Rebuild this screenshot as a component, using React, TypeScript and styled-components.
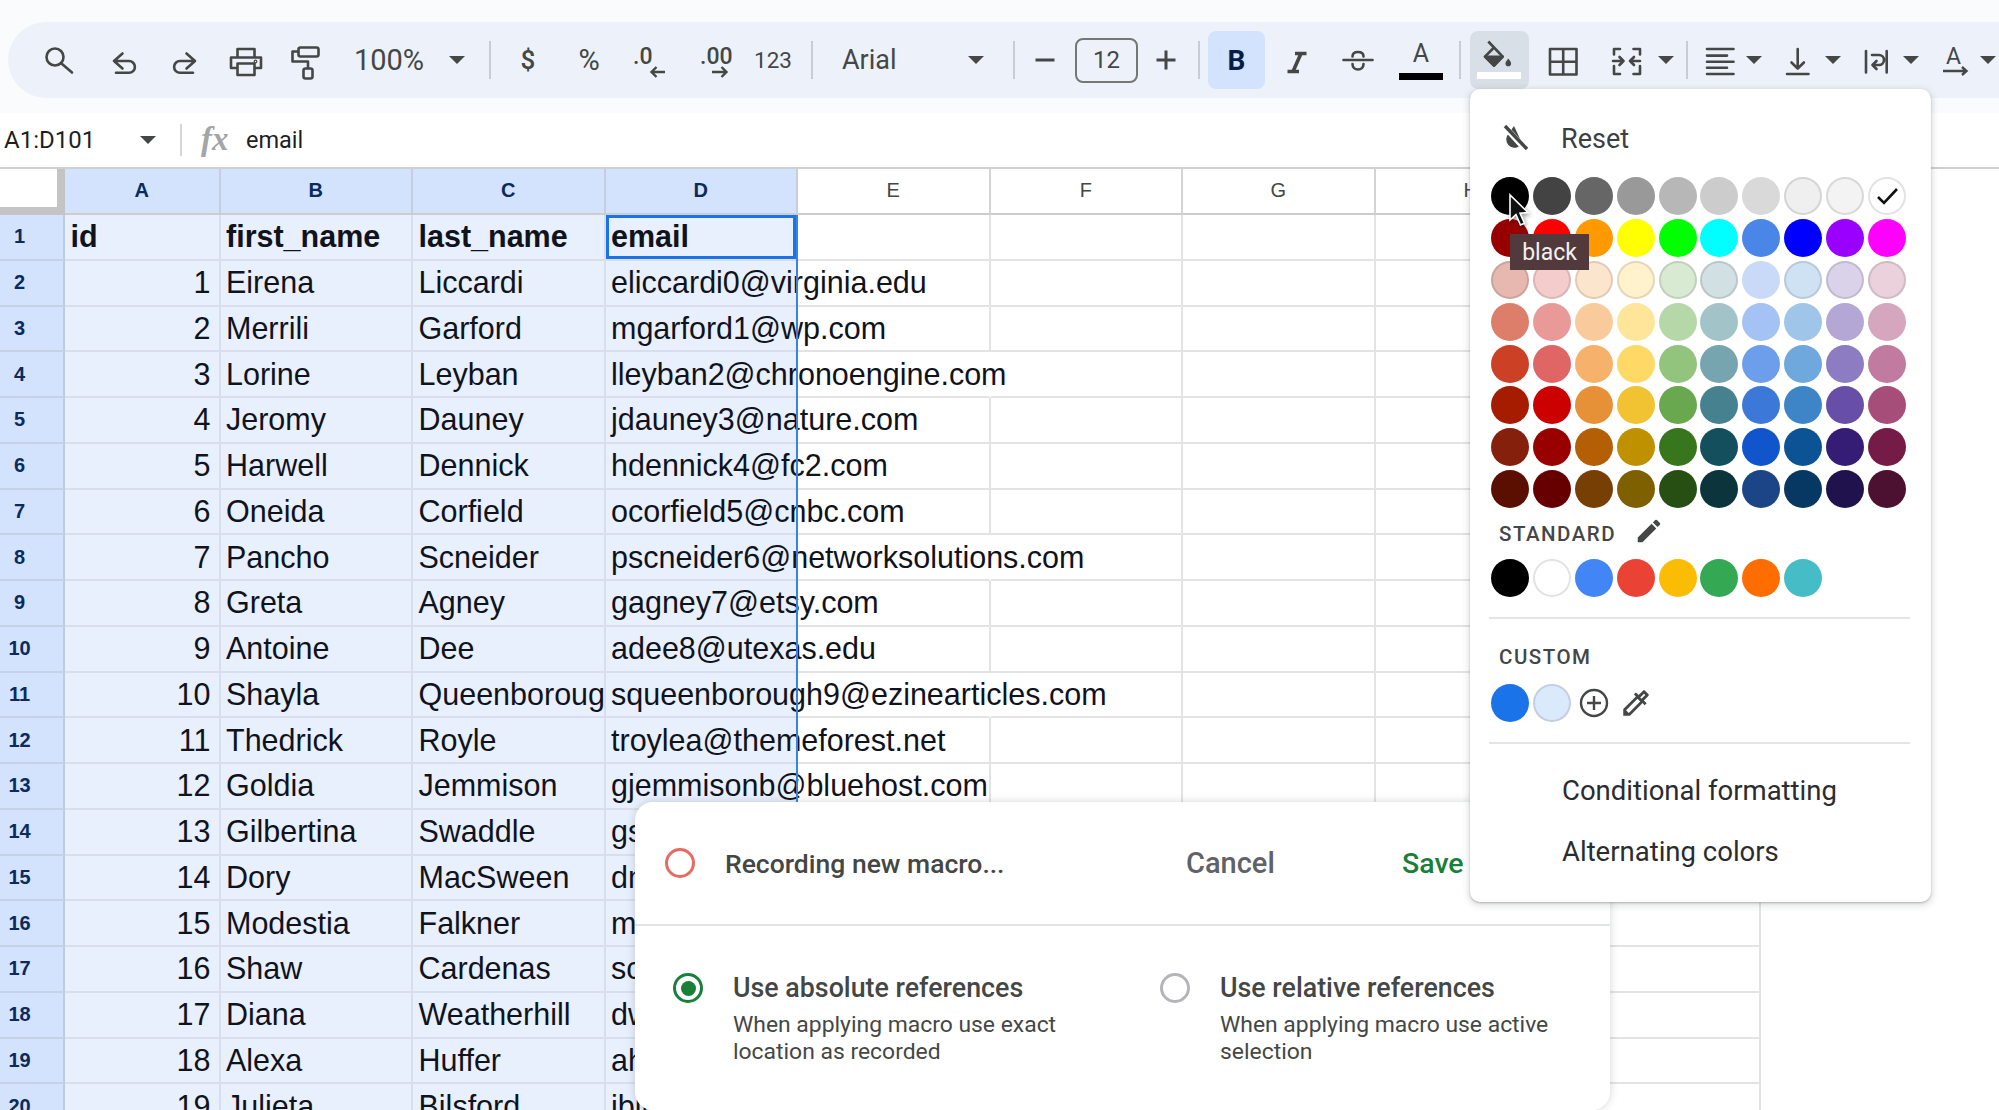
import { FC, ReactNode } from 'react';
import styled, { createGlobalStyle, css } from 'styled-components';
import { MdEdit, MdOutlineColorize } from 'react-icons/md';

const UI_FONT = `Roboto, "Liberation Sans", sans-serif`;
const CELL_FONT = `"Liberation Sans", Arial, sans-serif`;
const ICON = '#444746';

const GlobalStyle = createGlobalStyle`
    html, body {
        margin: 0;
        padding: 0;
        background: #fff;
    }
`;

const Page = styled.div`
    position: relative;
    width: 1999px;
    height: 1110px;
    overflow: hidden;
    display: flex;
    flex-direction: column;
    background: #fff;
    font-family: ${UI_FONT};
`;

/* toolbar */

const TopBand = styled.div`
    height: 113px;
    flex: none;
    box-sizing: border-box;
    padding: 22px 0 15px 8px;
    background: #f9fbfd;
`;

const Toolbar = styled.div`
    height: 76px;
    margin-right: -40px;
    padding-left: 31px;
    display: flex;
    align-items: center;
    border-radius: 38px;
    background: #edf2fa;
`;

const Tool = styled.div<{ $w?: number; $ml?: number }>`
    flex: none;
    width: ${p => p.$w ?? 40}px;
    height: 40px;
    margin-left: ${p => p.$ml ?? 0}px;
    display: flex;
    align-items: center;
    justify-content: center;
    color: ${ICON};

    svg {
        display: block;
    }
`;

const ToolText = styled(Tool)<{ $size?: number; $weight?: number; $left?: boolean }>`
    font-size: ${p => p.$size ?? 24}px;
    font-weight: ${p => p.$weight ?? 400};
    justify-content: ${p => (p.$left ? 'flex-start' : 'center')};
`;

const Caret = styled(Tool).attrs({ $w: 20 })`
    &::after {
        content: '';
        border-left: 8px solid transparent;
        border-right: 8px solid transparent;
        border-top: 8px solid ${ICON};
    }
`;

const Divider = styled.div<{ $ml: number }>`
    flex: none;
    width: 2px;
    height: 38px;
    margin-left: ${p => p.$ml}px;
    background: #c9ccd1;
`;

const SizeBox = styled.div`
    flex: none;
    box-sizing: border-box;
    width: 63px;
    height: 45px;
    margin-left: 15px;
    display: flex;
    align-items: center;
    justify-content: center;
    border: 2px solid #747775;
    border-radius: 8px;
    color: ${ICON};
    font-size: 24px;
`;

const ToggleButton = styled.div<{ $w: number; $ml: number; $bg: string }>`
    flex: none;
    position: relative;
    width: ${p => p.$w}px;
    height: 58px;
    margin-left: ${p => p.$ml}px;
    display: flex;
    align-items: center;
    justify-content: center;
    border-radius: 8px;
    background: ${p => p.$bg};
`;

const BoldGlyph = styled.span`
    font-size: 28px;
    font-weight: 700;
    color: #041e49;
`;

const TextColorTool = styled.div`
    flex: none;
    width: 44px;
    height: 40px;
    margin-left: 21px;
    display: flex;
    flex-direction: column;
    align-items: center;
    justify-content: space-between;
    color: ${ICON};
    font-size: 25px;
    line-height: 28px;
`;

const ColorBar = styled.div<{ $color: string }>`
    width: 44px;
    height: 7px;
    flex: none;
    background: ${p => p.$color};
`;

const FillBar = styled(ColorBar)`
    position: absolute;
    left: 7px;
    bottom: 10px;
`;

const Stroke: FC<{ w?: number; children: ReactNode }> = ({ w = 40, children }) => (
    <svg width={w} height={40} viewBox={`0 0 ${w} 40`} fill="none" stroke={ICON} strokeWidth={2.6} strokeLinecap="round" strokeLinejoin="round">
        {children}
    </svg>
);

/* formula bar */

const FormulaBar = styled.div`
    height: 54px;
    flex: none;
    box-sizing: border-box;
    padding: 0 0 1px 4px;
    display: flex;
    align-items: center;
    background: #fff;
`;

const NameBox = styled.div`
    width: 136px;
    font-size: 24px;
    color: #1f1f1f;
`;

const SmallCaret = styled.div`
    flex: none;
    margin-right: 24px;
    border-left: 8px solid transparent;
    border-right: 8px solid transparent;
    border-top: 8px solid ${ICON};
`;

const BarDivider = styled.div`
    width: 2px;
    height: 32px;
    flex: none;
    background: #d4d6d9;
`;

const FxLabel = styled.div`
    margin-left: 19px;
    width: 45px;
    font-family: "Liberation Serif", serif;
    font-style: italic;
    font-weight: 700;
    font-size: 33px;
    color: #a3a5a8;
`;

const FormulaText = styled.div`
    font-size: 23.5px;
    color: #1f1f1f;
`;

/* sheet */

const gridColumns = css`
    display: grid;
    grid-template-columns: 65px 155.5px repeat(9, 192.5px);
`;

const Sheet = styled.div`
    position: relative;
    flex: 1;
    overflow: hidden;
    border-top: 2px solid #cfcfcf;
`;

const HeaderRow = styled.div`
    ${gridColumns};
    height: 46px;
    box-sizing: border-box;
`;

const Corner = styled.div`
    box-sizing: border-box;
    border-right: 8px solid #c4c4c4;
    border-bottom: 8px solid #c4c4c4;
    background: #fff;
`;

const ColumnHead = styled.div<{ $selected: boolean }>`
    box-sizing: border-box;
    padding-bottom: 2px;
    display: flex;
    align-items: center;
    justify-content: center;
    border-right: 2px solid ${p => (p.$selected ? '#c3cede' : '#d4d4d4')};
    border-bottom: 2px solid #cdcdcd;
    background: ${p => (p.$selected ? '#d3e3fd' : '#fff')};
    color: ${p => (p.$selected ? '#0b2a5e' : '#444746')};
    font-family: ${CELL_FONT};
    font-size: 20px;
    font-weight: ${p => (p.$selected ? 700 : 400)};
`;

const DataRow = styled.div`
    ${gridColumns};
    height: 45.75px;
`;

const RowHead = styled.div`
    box-sizing: border-box;
    padding-right: 24px;
    display: flex;
    align-items: center;
    justify-content: center;
    border-right: 2px solid #bccbe2;
    border-bottom: 2px solid #c6d2e4;
    background: #d3e3fd;
    color: #0b2a5e;
    font-family: ${CELL_FONT};
    font-size: 20px;
    font-weight: 700;
`;

const Cell = styled.div<{ $right?: boolean; $bold?: boolean; $spill?: boolean; $active?: boolean }>`
    box-sizing: border-box;
    padding: 0 8px 0 5.5px;
    display: flex;
    align-items: center;
    justify-content: ${p => (p.$right ? 'flex-end' : 'flex-start')};
    overflow: ${p => (p.$spill ? 'visible' : 'hidden')};
    white-space: nowrap;
    border-right: 2px solid #d8deea;
    border-bottom: 2px solid #d8deea;
    background: #e8effd;
    color: #10131c;
    font-family: ${CELL_FONT};
    font-size: 30.5px;
    font-weight: ${p => (p.$bold ? 700 : 400)};
    ${p =>
        p.$active &&
        css`
            box-shadow: inset 0 0 0 3px #1a73e8;
        `}
`;

const BlankCell = styled.div<{ $open?: boolean }>`
    box-sizing: border-box;
    border-right: 2px solid ${p => (p.$open ? 'transparent' : '#e3e3e3')};
    border-bottom: 2px solid #e3e3e3;
`;

const SelectionEdge = styled.div`
    position: absolute;
    left: 796px;
    top: 46px;
    bottom: 0;
    width: 2px;
    background: #3b82e6;
`;

/* fill colour popup */

const ColorPopup = styled.div`
    position: absolute;
    left: 1470px;
    top: 89px;
    width: 461px;
    height: 813px;
    box-sizing: border-box;
    padding: 0 21px;
    border-radius: 10px;
    background: #fff;
    box-shadow: 0 2px 6px 2px rgba(60, 64, 67, 0.15), 0 1px 2px rgba(60, 64, 67, 0.3);
    color: #3c4043;
`;

const ResetRow = styled.div`
    height: 88px;
    padding: 11px 0 0 11px;
    box-sizing: border-box;
    display: flex;
    align-items: center;
    gap: 33px;
    font-size: 27px;

    svg {
        transform: translateY(-2px);
    }
`;

const SwatchGrid = styled.div`
    display: grid;
    grid-template-columns: repeat(10, 38px);
    grid-auto-rows: 38px;
    gap: 3.9px;
`;

const Swatch = styled.div<{ $color: string; $outlined?: boolean }>`
    position: relative;
    box-sizing: border-box;
    width: 38px;
    height: 38px;
    border-radius: 50%;
    background: ${p => p.$color};
    ${p => p.$outlined && 'border: 2px solid rgba(0, 0, 0, 0.11);'}

    svg {
        position: absolute;
        left: 6px;
        top: 7px;
    }
`;

const SectionLabel = styled.div<{ $h: number; $pt?: number }>`
    height: ${p => p.$h}px;
    box-sizing: border-box;
    padding: ${p => p.$pt ?? 0}px 0 0 8px;
    display: flex;
    align-items: center;
    gap: 18px;
    color: #444746;
    font-size: 20.5px;
    font-weight: 500;
    letter-spacing: 1.5px;

    svg {
        transform: translateY(-3px);
    }
`;

const PopupRule = styled.div`
    height: 2px;
    margin: 20px 0 0 -2px;
    background: #e3e5e8;
`;

const SwatchRow = styled.div`
    display: flex;
    gap: 3.9px;
    align-items: center;
`;

const IconSlot = styled.div`
    width: 38px;
    height: 38px;
    flex: none;
    display: flex;
    align-items: center;
    justify-content: center;
    color: #444746;
`;

const MenuList = styled.div`
    margin-top: 15.5px;
`;

const MenuItem = styled.div`
    height: 61px;
    padding-left: 71px;
    display: flex;
    align-items: center;
    font-size: 27.5px;
    color: #2a2c2f;
`;

const Tooltip = styled.div`
    position: absolute;
    left: 1510px;
    top: 234px;
    width: 79px;
    height: 36px;
    display: flex;
    align-items: center;
    justify-content: center;
    background: #523a3c;
    color: #f4f0f0;
    font-size: 23px;
`;

const Cursor = styled.svg`
    position: absolute;
    left: 1508px;
    top: 193px;
    filter: drop-shadow(1px 2px 2px rgba(0, 0, 0, 0.4));
`;

/* macro panel */

const MacroPanel = styled.div`
    position: absolute;
    left: 635px;
    top: 802px;
    width: 975px;
    height: 308px;
    border-radius: 18px;
    background: #fff;
    box-shadow: 0 0 8px rgba(60, 64, 67, 0.22);
    overflow: hidden;
`;

const MacroHead = styled.div`
    height: 124px;
    box-sizing: border-box;
    padding-left: 30px;
    display: flex;
    align-items: center;
    border-bottom: 2px solid #e2e3e5;
`;

const RecordRing = styled.div`
    width: 30px;
    height: 30px;
    flex: none;
    box-sizing: border-box;
    margin-right: 30px;
    border: 3.5px solid #e76a63;
    border-radius: 50%;
`;

const MacroAction = styled.div<{ $w: number; $color: string; $size: number }>`
    width: ${p => p.$w}px;
    flex: none;
    color: ${p => p.$color};
    font-size: ${p => p.$size}px;
    font-weight: 500;
`;

const MacroOptions = styled.div`
    display: grid;
    grid-template-columns: 487px 1fr;
    padding: 47px 0 0 38px;
`;

const MacroOption = styled.div`
    display: flex;
    gap: 30px;
`;

const Radio = styled.div<{ $on?: boolean }>`
    width: 30px;
    height: 30px;
    flex: none;
    box-sizing: border-box;
    display: flex;
    align-items: center;
    justify-content: center;
    border: 3.5px solid ${p => (p.$on ? '#188038' : '#b3b5b8')};
    border-radius: 50%;

    ${p =>
        p.$on &&
        css`
            &::after {
                content: '';
                width: 15px;
                height: 15px;
                border-radius: 50%;
                background: #188038;
            }
        `}
`;

const OptionTitle = styled.div`
    font-size: 26.8px;
    font-weight: 500;
    line-height: 30px;
    color: #444746;
`;

const OptionNote = styled.div`
    width: 345px;
    margin-top: 9px;
    font-size: 22.9px;
    line-height: 26.5px;
    color: #444746;
`;

const PALETTE = [
    '#000000', '#434343', '#666666', '#999999', '#b7b7b7', '#cccccc', '#d9d9d9', '#efefef', '#f3f3f3', '#ffffff',
    '#980000', '#ff0000', '#ff9900', '#ffff00', '#00ff00', '#00ffff', '#4a86e8', '#0000ff', '#9900ff', '#ff00ff',
    '#e6b8af', '#f4cccc', '#fce5cd', '#fff2cc', '#d9ead3', '#d0e0e3', '#c9daf8', '#cfe2f3', '#d9d2e9', '#ead1dc',
    '#dd7e6b', '#ea9999', '#f9cb9c', '#ffe599', '#b6d7a8', '#a2c4c9', '#a4c2f4', '#9fc5e8', '#b4a7d6', '#d5a6bd',
    '#cc4125', '#e06666', '#f6b26b', '#ffd966', '#93c47d', '#76a5af', '#6d9eeb', '#6fa8dc', '#8e7cc3', '#c27ba0',
    '#a61c00', '#cc0000', '#e69138', '#f1c232', '#6aa84f', '#45818e', '#3c78d8', '#3d85c6', '#674ea7', '#a64d79',
    '#85200c', '#990000', '#b45f06', '#bf9000', '#38761d', '#134f5c', '#1155cc', '#0b5394', '#351c75', '#741b47',
    '#5b0f00', '#660000', '#783f04', '#7f6000', '#274e13', '#0c343d', '#1c4587', '#073763', '#20124d', '#4c1130',
];
const OUTLINED = ['#efefef', '#f3f3f3', '#ffffff', '#fce5cd', '#fff2cc', '#d9ead3', '#d0e0e3', '#cfe2f3', '#d9d2e9', '#ead1dc', '#e6b8af', '#f4cccc'];
const STANDARD = ['#000000', '#ffffff', '#4285f4', '#ea4335', '#fbbc04', '#34a853', '#ff6d01', '#46bdc6'];

const COLUMNS = ['A', 'B', 'C', 'D', 'E', 'F', 'G', 'H', 'I'];

const PEOPLE: [string, string, string][] = [
    ['Eirena', 'Liccardi', 'eliccardi0@virginia.edu'],
    ['Merrili', 'Garford', 'mgarford1@wp.com'],
    ['Lorine', 'Leyban', 'lleyban2@chronoengine.com'],
    ['Jeromy', 'Dauney', 'jdauney3@nature.com'],
    ['Harwell', 'Dennick', 'hdennick4@fc2.com'],
    ['Oneida', 'Corfield', 'ocorfield5@cnbc.com'],
    ['Pancho', 'Scneider', 'pscneider6@networksolutions.com'],
    ['Greta', 'Agney', 'gagney7@etsy.com'],
    ['Antoine', 'Dee', 'adee8@utexas.edu'],
    ['Shayla', 'Queenborough', 'squeenborough9@ezinearticles.com'],
    ['Thedrick', 'Royle', 'troylea@themeforest.net'],
    ['Goldia', 'Jemmison', 'gjemmisonb@bluehost.com'],
    ['Gilbertina', 'Swaddle', 'gswaddlec@mail.com'],
    ['Dory', 'MacSween', 'dmacsweend@mail.com'],
    ['Modestia', 'Falkner', 'mfalknere@mail.com'],
    ['Shaw', 'Cardenas', 'scardenasf@mail.com'],
    ['Diana', 'Weatherhill', 'dweatherhillg@mail.com'],
    ['Alexa', 'Huffer', 'ahufferh@mail.com'],
    ['Julieta', 'Bilsford', 'jbilsfordi@mail.com'],
];

const ToolbarRow: FC = () => (
    <Toolbar>
        <Tool>
            <Stroke>
                <circle cx="16" cy="17" r="8.5" />
                <path d="M22.5 23.5 33 32.5" />
            </Stroke>
        </Tool>
        <Tool $ml={25}>
            <Stroke>
                <path d="M18.5 13.5 10 21l8.5 7.5M10 21h15a5.9 5.9 0 0 1 0 11.8H12" />
            </Stroke>
        </Tool>
        <Tool $ml={21}>
            <Stroke>
                <path d="M21.5 13.5 30 21l-8.5 7.5M30 21H15a5.9 5.9 0 0 0 0 11.8h13" />
            </Stroke>
        </Tool>
        <Tool $ml={21}>
            <Stroke>
                <path d="M11.5 17V9h17v8M11 28H5V17.5h30V28h-6" />
                <path d="M11.5 23.5h17V35h-17z" />
                <circle cx="29.5" cy="21.5" r="0.6" />
            </Stroke>
        </Tool>
        <Tool $ml={19}>
            <Stroke>
                <rect x="13.5" y="7.5" width="20" height="9" rx="2" />
                <path d="M13 11.5H7.5v10H23V28" />
                <rect x="18.5" y="28.5" width="9" height="10" rx="2" />
            </Stroke>
        </Tool>
        <ToolText $w={80} $ml={24} $size={29}>100%</ToolText>
        <Caret $ml={18} />
        <Divider $ml={22} />
        <ToolText $w={30} $ml={22} $size={26} $weight={500}>$</ToolText>
        <ToolText $w={30} $ml={31} $size={29}>%</ToolText>
        <Tool $ml={26}>
            <svg width="40" height="40" viewBox="0 0 40 40" fill={ICON}>
                <text x="3" y="24" fontSize="23" fontWeight="500" fontFamily="Roboto, sans-serif">.0</text>
                <path d="M22 32h13M26.5 27 21.5 32l5 5" fill="none" stroke={ICON} strokeWidth="2.4" />
            </svg>
        </Tool>
        <Tool $w={44} $ml={25}>
            <svg width="44" height="40" viewBox="0 0 44 40" fill={ICON}>
                <text x="5" y="24" fontSize="23" fontWeight="500" fontFamily="Roboto, sans-serif">.00</text>
                <path d="M17 32h14M26.5 27l5 5-5 5" fill="none" stroke={ICON} strokeWidth="2.4" />
            </svg>
        </Tool>
        <ToolText $w={44} $ml={12} $size={22.5}>123</ToolText>
        <Divider $ml={16} />
        <ToolText $w={100} $ml={29} $size={27} $left>Arial</ToolText>
        <Caret $ml={24} />
        <Divider $ml={27} />
        <Tool $w={30} $ml={15}>
            <svg width="30" height="40" viewBox="0 0 30 40" stroke={ICON} strokeWidth="3">
                <path d="M5.5 20h19" />
            </svg>
        </Tool>
        <SizeBox>12</SizeBox>
        <Tool $w={30} $ml={13}>
            <svg width="30" height="40" viewBox="0 0 30 40" stroke={ICON} strokeWidth="3">
                <path d="M5.5 20h19M15 10.5v19" />
            </svg>
        </Tool>
        <Divider $ml={17} />
        <ToggleButton $w={57} $ml={8} $bg="#d3e3fd">
            <BoldGlyph>B</BoldGlyph>
        </ToggleButton>
        <Tool $ml={12}>
            <svg width="40" height="40" viewBox="0 0 40 40" fill="none" stroke={ICON} strokeWidth="3.6">
                <path d="M18 13.5h11.5M10.5 31.5H22M24 13.5l-8 18" />
            </svg>
        </Tool>
        <Tool $ml={21}>
            <Stroke>
                <path d="M5.5 20h29" />
                <path d="M14.5 16.5c0-3 2.5-4.5 5.5-4.5s5.5 1.5 5.5 4.5" />
                <path d="M14.5 24c0 3.5 2.5 5.5 5.5 5.5s5.5-2 5.5-5.5" />
            </Stroke>
        </Tool>
        <TextColorTool>
            <span>A</span>
            <ColorBar $color="#000" />
        </TextColorTool>
        <Divider $ml={16} />
        <ToggleButton $w={59} $ml={9} $bg="#d9dfe7">
            <svg width="59" height="58" viewBox="0 0 59 58" fill="none" stroke={ICON} strokeWidth="2.6" strokeLinejoin="round">
                <path d="M24 16.5 15 25.7l9 9 8.7-9zM18.3 10.5 24 16.5" />
                <path d="M15 25.7h17.7L24 34.7z" fill={ICON} />
                <path d="M38.3 27.5c-1.6 2.2-2.8 3.4-2.8 4.9a2.8 2.8 0 0 0 5.6 0c0-1.5-1.2-2.7-2.8-4.9z" fill={ICON} stroke="none" />
            </svg>
            <FillBar $color="#fff" />
        </ToggleButton>
        <Tool $ml={14}>
            <Stroke>
                <path d="M7 9h26.5v25.5H7zM20.2 9v25.5M7 21.7h26.5" />
            </Stroke>
        </Tool>
        <Tool $ml={25}>
            <Stroke>
                <path d="M12 9H6v5.5M6 26v8h6M25.5 9H32v5.5M32 26v8h-6.5" />
                <path d="M5 21h10.5M11.5 17l4 4-4 4M32 21H22M26 17l-4 4 4 4" />
            </Stroke>
        </Tool>
        <Caret $ml={8} />
        <Divider $ml={10} />
        <Tool $ml={13}>
            <Stroke>
                <path d="M6 9h26.5M6 15.6h20M6 21.7h26.5M6 27.7h20M6 34h26.5" />
            </Stroke>
        </Tool>
        <Caret $ml={3} />
        <Tool $ml={14}>
            <Stroke>
                <path d="M19.7 9v19M13.5 22.5l6.2 6 6.2-6M9 34h21.5" />
            </Stroke>
        </Tool>
        <Caret $ml={5} />
        <Tool $ml={14}>
            <Stroke>
                <path d="M9 11v21.5M29.7 11v21.5M15 15h7a5 5 0 0 1 0 10h-6" />
                <path d="M19.5 21 15.5 25l4 4" />
            </Stroke>
        </Tool>
        <Caret $ml={4} />
        <Tool $ml={14}>
            <svg width="40" height="40" viewBox="0 0 40 40" fill={ICON}>
                <text x="18.5" y="24" textAnchor="middle" fontSize="23" fontFamily="Roboto, sans-serif">A</text>
                <path d="M8 31h23M27 27l4.5 4-4.5 4" fill="none" stroke={ICON} strokeWidth="2.4" />
            </svg>
        </Tool>
        <Caret $ml={3} />
    </Toolbar>
);

const Grid: FC = () => (
    <Sheet>
        <HeaderRow>
            <Corner />
            {COLUMNS.map((c, i) => (
                <ColumnHead key={c} $selected={i < 4}>{c}</ColumnHead>
            ))}
        </HeaderRow>
        <DataRow>
            <RowHead>1</RowHead>
            <Cell $bold>id</Cell>
            <Cell $bold>first_name</Cell>
            <Cell $bold>last_name</Cell>
            <Cell $bold $active>email</Cell>
            {COLUMNS.slice(4).map(c => (
                <BlankCell key={c} />
            ))}
        </DataRow>
        {PEOPLE.map(([first, last, email], i) => (
            <DataRow key={email}>
                <RowHead>{i + 2}</RowHead>
                <Cell $right>{i + 1}</Cell>
                <Cell>{first}</Cell>
                <Cell>{last}</Cell>
                <Cell $spill>{email}</Cell>
                {COLUMNS.slice(4).map((c, n) => (
                    <BlankCell key={c} $open={n === 0 && email.length > 24} />
                ))}
            </DataRow>
        ))}
        <SelectionEdge />
    </Sheet>
);

const FillPopup: FC = () => (
    <ColorPopup>
        <ResetRow>
            <svg width="26" height="28" viewBox="0 0 26 28">
                <path d="M12 3 5 13a8 8 0 0 0 15 7z" fill={ICON} />
                <path d="M3 4 24 27" stroke="#fff" strokeWidth="6" />
                <path d="M3 3 25 26" stroke={ICON} strokeWidth="3.4" />
            </svg>
            <span>Reset</span>
        </ResetRow>
        <SwatchGrid>
            {PALETTE.map((c, i) => (
                <Swatch key={c + i} $color={c} $outlined={OUTLINED.includes(c)}>
                    {c === '#ffffff' && (
                        <svg width="23" height="20" viewBox="0 0 23 20" fill="none" stroke="#111" strokeWidth="2.6">
                            <path d="M2 11l6 6L21 3" />
                        </svg>
                    )}
                </Swatch>
            ))}
        </SwatchGrid>
        <SectionLabel $h={51}>
            STANDARD
            <MdEdit size={30} color={ICON} />
        </SectionLabel>
        <SwatchRow>
            {STANDARD.map(c => (
                <Swatch key={c} $color={c} $outlined={c === '#ffffff'} />
            ))}
        </SwatchRow>
        <PopupRule />
        <SectionLabel $h={65} $pt={10}>CUSTOM</SectionLabel>
        <SwatchRow>
            <Swatch $color="#1a73e8" />
            <Swatch $color="#dbe9fc" $outlined />
            <IconSlot>
                <svg width="30" height="30" viewBox="0 0 30 30" fill="none" stroke={ICON} strokeWidth="2.4">
                    <circle cx="15" cy="15" r="13" />
                    <path d="M15 8v14M8 15h14" />
                </svg>
            </IconSlot>
            <IconSlot>
                <MdOutlineColorize size={34} />
            </IconSlot>
        </SwatchRow>
        <PopupRule />
        <MenuList>
            <MenuItem>Conditional formatting</MenuItem>
            <MenuItem>Alternating colors</MenuItem>
        </MenuList>
    </ColorPopup>
);

const MacroRecorder: FC = () => (
    <MacroPanel>
        <MacroHead>
            <RecordRing />
            <MacroAction $w={461} $size={26.5} $color="#444746">Recording new macro...</MacroAction>
            <MacroAction $w={216} $size={29} $color="#5f6368">Cancel</MacroAction>
            <MacroAction $w={80} $size={28.5} $color="#188038">Save</MacroAction>
        </MacroHead>
        <MacroOptions>
            <MacroOption>
                <Radio $on />
                <div>
                    <OptionTitle>Use absolute references</OptionTitle>
                    <OptionNote>When applying macro use exact location as recorded</OptionNote>
                </div>
            </MacroOption>
            <MacroOption>
                <Radio />
                <div>
                    <OptionTitle>Use relative references</OptionTitle>
                    <OptionNote>When applying macro use active selection</OptionNote>
                </div>
            </MacroOption>
        </MacroOptions>
    </MacroPanel>
);

const App: FC = () => (
    <Page>
        <GlobalStyle />
        <TopBand>
            <ToolbarRow />
        </TopBand>
        <FormulaBar>
            <NameBox>A1:D101</NameBox>
            <SmallCaret />
            <BarDivider />
            <FxLabel>fx</FxLabel>
            <FormulaText>email</FormulaText>
        </FormulaBar>
        <Grid />
        <MacroRecorder />
        <FillPopup />
        <Cursor width="22" height="36" viewBox="0 0 22 36">
            <path d="M2 2v25l6-5.5 4.5 10.5 4-1.8-4.5-10 8-.7z" fill="#111" stroke="#fff" strokeWidth="1.6" />
        </Cursor>
        <Tooltip>black</Tooltip>
    </Page>
);

export default App;
